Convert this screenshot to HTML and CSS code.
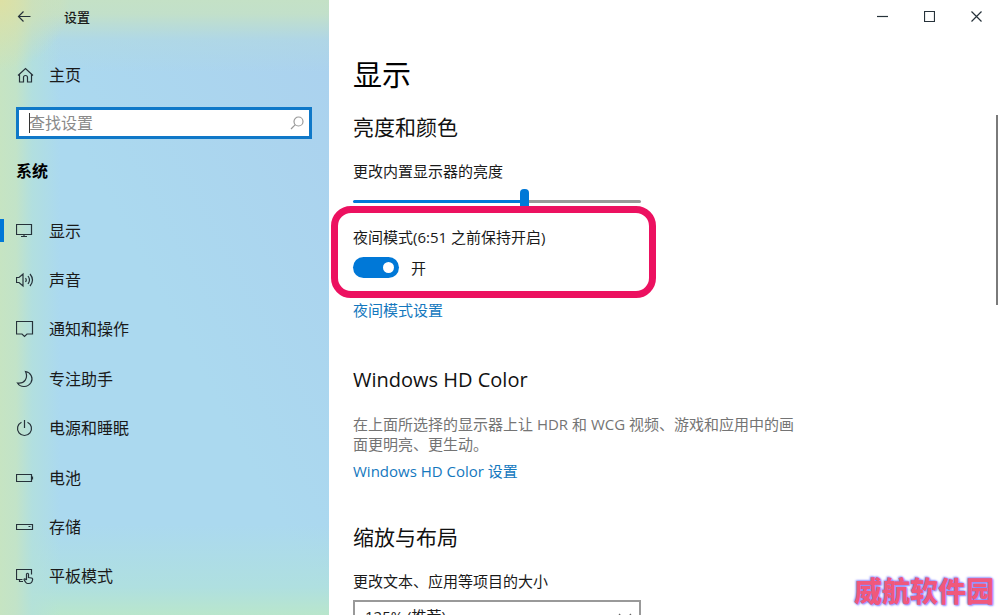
FILE: index.html
```html
<!DOCTYPE html>
<html lang="zh-CN">
<head>
<meta charset="utf-8">
<meta name="viewport" content="width=device-width, initial-scale=1">
<title>设置</title>
<link rel="stylesheet" href="styles.css">
</head>
<body>
<div class="window">
  <aside class="sidebar">
    <header class="title-row">
      <button class="back" type="button" aria-label="返回">
        <svg class="icon" width="18" height="18" viewBox="0 0 18 18"><path d="M14.500 8.500H2.500M7.500 3.500L2.500 8.500L7.500 13.500"/></svg>
      </button>
      <span class="window-title">设置</span>
    </header>
    <a class="home" href="#home">
      <svg class="icon" width="18" height="18" viewBox="0 0 18 18"><path d="M2 9.500L9.500 2.500L17 9.500M3.500 8.500V16H7.500V11.500Q7.500 9.500 9.500 9.500Q11.500 9.500 11.500 11.500V16H15.500V8.500"/></svg>
      主页
    </a>
    <div class="search">
      <span class="caret"></span>
      <input class="search-input" type="text" placeholder="查找设置" aria-label="查找设置">
      <svg class="icon search-icon" width="14" height="14" viewBox="0 0 14 14"><circle cx="8.500" cy="5.500" r="4.500"/><path d="M5.300 8.700L1 13"/></svg>
    </div>
    <h2 class="group-title">系统</h2>
    <nav class="nav" aria-label="系统">
      <a class="nav-item active" href="#display">
        <svg class="icon" width="18" height="18" viewBox="0 0 18 18"><path d="M.5 2.500H15.500V12.500H.5ZM8 12.500V14.500M5 14.500H11"/></svg>显示</a>
      <a class="nav-item" href="#sound">
        <svg class="icon" width="18" height="18" viewBox="0 0 18 18"><path d="M.5 6.500H3L7 3V15L3 11.500H.5ZM9.500 7Q11 9 9.500 11M12 5Q15 9 12 13M14 3Q19 9 14 15"/></svg>声音</a>
      <a class="nav-item" href="#notifications">
        <svg class="icon" width="18" height="18" viewBox="0 0 18 18"><path d="M.5 1.500H16.500V14H11L8.500 16.500L6 14H.5Z"/></svg>通知和操作</a>
      <a class="nav-item" href="#focus">
        <svg class="icon" width="18" height="18" viewBox="0 0 18 18"><path d="M9.500 1.500C15 2.500 17.500 8 15 12.500C12 17.500 4.500 18 1.500 13C8.500 14 12.500 8 9.500 1.500Z"/></svg>专注助手</a>
      <a class="nav-item" href="#power">
        <svg class="icon" width="18" height="18" viewBox="0 0 18 18"><path d="M8.500 1V9M5.500 3.200A7 7 0 1 0 11.500 3.200"/></svg>电源和睡眠</a>
      <a class="nav-item" href="#battery">
        <svg class="icon" width="18" height="18" viewBox="0 0 18 18"><path d="M.5 5.500H15.500V12.500H.5ZM16.500 7.500V10.500"/></svg>电池</a>
      <a class="nav-item" href="#storage">
        <svg class="icon" width="18" height="18" viewBox="0 0 18 18"><path d="M.5 6.500H16.500V11.500H.5ZM12.500 8.500H14.500"/></svg>存储</a>
      <a class="nav-item" href="#tablet">
        <svg class="icon" width="18" height="18" viewBox="0 0 18 18"><path d="M6.500 12.500H.5V2.500H15.500V7.500M3.500 12.500V14.500H7M10.500 13V7Q11.500 5.500 12.500 7V10.500L15.500 11Q17 11.300 16.500 13Q16 16.500 13 16.500H11.500Q10 16.500 8 12.500Q8.500 11 10.500 13"/></svg>平板模式</a>
    </nav>
  </aside>

  <main class="main">
    <div class="controls">
      <button class="control" type="button" aria-label="最小化"><svg class="icon" width="11" height="11" viewBox="0 0 11 11"><path d="M0 5.500H11"/></svg></button>
      <button class="control" type="button" aria-label="最大化"><svg class="icon" width="11" height="11" viewBox="0 0 11 11"><path d="M.5 .5H10.500V10.500H.5Z"/></svg></button>
      <button class="control" type="button" aria-label="关闭"><svg class="icon" width="11" height="11" viewBox="0 0 11 11"><path d="M.5 .5L10.500 10.500M10.500 .5L.5 10.500"/></svg></button>
    </div>
    <div class="content">
      <h1 class="page-title">显示</h1>
      <section class="section">
        <h2 class="heading">亮度和颜色</h2>
        <label class="label" for="brightness">更改内置显示器的亮度</label>
        <input class="slider" id="brightness" type="range" min="0" max="100" value="60">
        <div class="night">
          <label class="label" for="night">夜间模式(6:51 之前保持开启)</label>
          <div class="toggle-row">
            <input class="toggle" id="night" type="checkbox" role="switch" checked>
            <span>开</span>
          </div>
        </div>
        <a class="link" href="#night-settings">夜间模式设置</a>
      </section>
      <section class="section">
        <h2 class="heading latin">Windows HD Color</h2>
        <p class="note">在上面所选择的显示器上让 HDR 和 WCG 视频、游戏和应用中的画面更明亮、更生动。</p>
        <a class="link" href="#hd-color">Windows HD Color 设置</a>
      </section>
      <section class="section">
        <h2 class="heading">缩放与布局</h2>
        <label class="label" for="scale">更改文本、应用等项目的大小</label>
        <div class="select-box">
          <select class="select" id="scale"><option>125% (推荐)</option></select>
          <svg class="icon chevron" width="14" height="8" viewBox="0 0 14 8"><path d="M1 1L7 7L13 1"/></svg>
        </div>
      </section>
    </div>
    <div class="scroll-thumb"></div>
    <div class="watermark">威航软件园</div>
  </main>
</div>
</body>
</html>
```

FILE: styles.css
```css
* {
  box-sizing: border-box;
}

body {
  margin: 0;
  font-family: "Open Sans", "Noto Sans CJK SC", sans-serif;
  font-size: 16px;
  line-height: 20px;
  color: #1a1a1a;
  background: #fff;
}

h1, h2, p {
  margin: 0;
  font-weight: 400;
}

a {
  color: inherit;
  text-decoration: none;
}

button, input, select {
  margin: 0;
  padding: 0;
  border: 0;
  background: none;
  font: inherit;
  color: inherit;
}

.icon {
  flex: none;
  fill: none;
  stroke: #26323a;
  stroke-width: 1.2;
}

.window {
  display: flex;
  height: 100vh;
  overflow: hidden;
}

/* Sidebar */
.sidebar {
  flex: none;
  display: flex;
  flex-direction: column;
  width: 329px;
  padding: 0 17px 14px 16px;
  background:
    radial-gradient(circle at 0 0, #dde0a4 0, #dde0a400 70px),
    linear-gradient(to right, #c6e4c2 0, #c2e3c8 16px, #b4e1dac0 32px, #abdbeb00 60px),
    linear-gradient(to bottom, #c4e1c6 0, #c2e0ca 14px, #b4dade80 40px, #abd9ef00 72px),
    linear-gradient(to top, #b9e6cc 0, #b0e1dccc 28px, #abdbec00 90px),
    linear-gradient(to bottom left, #abd1ee 0, #abd9ef 50%);
}

.title-row {
  display: flex;
  align-items: center;
  gap: 30px;
  height: 33px;
}

.back {
  display: flex;
}

.window-title {
  font-size: 13px;
  font-weight: 500;
}

.home {
  display: flex;
  align-items: center;
  gap: 15px;
  height: 40px;
  margin-top: 22px;
}

.search {
  position: relative;
  display: flex;
  align-items: center;
  height: 32px;
  margin-top: 12px;
  padding: 0 5px 0 10px;
  border: 3px solid #0f78c8;
  background: #fff;
}

.search-input {
  flex: 1;
  min-width: 0;
  outline: 0;
}

.search-input::placeholder {
  color: #8a8a8a;
  opacity: 1;
}

.caret {
  position: absolute;
  left: 10px;
  top: 3px;
  width: 1px;
  height: 20px;
  background: #333;
}

.search-icon {
  stroke: #999;
}

.group-title {
  margin-top: 22px;
  font-size: 16px;
  font-weight: 700;
  color: #000;
}

.nav {
  flex: 1;
  display: grid;
  grid-auto-rows: 1fr;
  margin: 25px -17px 0 -16px;
}

.nav-item {
  position: relative;
  display: flex;
  align-items: center;
  gap: 15px;
  padding-left: 16px;
}

.nav-item.active::before {
  content: "";
  position: absolute;
  left: 0;
  width: 4px;
  height: 23px;
  background: #0078d7;
}

/* Main area */
.main {
  position: relative;
  flex: 1;
  min-width: 0;
  font-size: 15px;
}

.controls {
  display: flex;
  justify-content: flex-end;
}

.control {
  display: flex;
  align-items: center;
  justify-content: center;
  width: 47px;
  height: 33px;
}

.content {
  max-width: 500px;
  padding: 22px 24px 24px;
}

.page-title {
  font-size: 29px;
  line-height: 40px;
  color: #000;
}

.section {
  margin-top: 46px;
}

.page-title + .section {
  margin-top: 18px;
}

.section:last-child {
  margin-top: 42px;
}

.heading {
  margin-bottom: 20px;
  font-size: 21px;
  line-height: 28px;
  color: #111;
}

.heading.latin {
  font-size: 20px;
}

.label, .link {
  display: block;
}

.link {
  color: #1478be;
}

.slider {
  display: block;
  appearance: none;
  width: 288px;
  height: 24px;
  margin: 8px 0 14px;
}

.slider::-webkit-slider-runnable-track {
  height: 3px;
  border-radius: 2px;
  background: linear-gradient(to right, #0078d7 60%, #999 60%);
}

.slider::-webkit-slider-thumb {
  appearance: none;
  width: 9px;
  height: 24px;
  margin-top: -11px;
  border-radius: 4px;
  background: #0078d7;
}

.night {
  position: relative;
  width: 288px;
  margin-bottom: 22px;
}

.night::after {
  content: "";
  position: absolute;
  inset: -21px -15px -20px -22px;
  border: 7px solid #ec1160;
  border-radius: 20px;
  pointer-events: none;
}

.toggle-row {
  display: flex;
  align-items: center;
  gap: 12px;
  margin-top: 10px;
}

.toggle {
  appearance: none;
  display: flex;
  align-items: center;
  justify-content: flex-end;
  width: 46px;
  height: 21px;
  padding-right: 5px;
  border-radius: 11px;
  background: #0078d7;
}

.toggle::before {
  content: "";
  width: 11px;
  height: 11px;
  border-radius: 50%;
  background: #fff;
}

.note {
  margin-bottom: 7px;
  color: #747474;
}

.select-box {
  position: relative;
  width: 288px;
  margin-top: 9px;
}

.select {
  appearance: none;
  width: 100%;
  height: 32px;
  padding: 0 32px 0 10px;
  border: 2px solid #999;
}

.chevron {
  position: absolute;
  right: 9px;
  top: 13px;
  stroke: #666;
}

.scroll-thumb {
  position: absolute;
  right: 2px;
  top: 115px;
  width: 2px;
  height: 190px;
  background: #7a7a7a;
}

.watermark {
  position: absolute;
  right: 6px;
  bottom: 4px;
  font-size: 28px;
  line-height: 40px;
  font-weight: 900;
  color: #f0587c;
  text-shadow: 0 0 2px #7d7dff, 1px 1px 2px #8d8dff, -1px -1px 2px #a9a9ff;
}
```
